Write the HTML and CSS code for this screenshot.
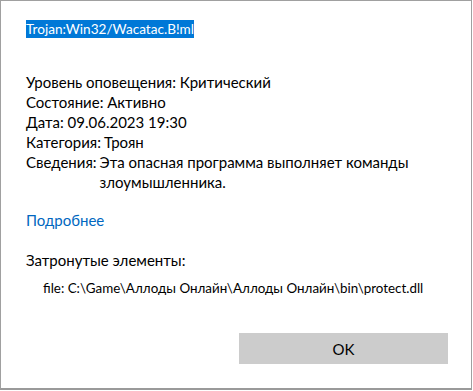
FILE: index.html
```html
<!DOCTYPE html>
<html lang="ru">
<head>
    <meta charset="UTF-8">
    <meta name="viewport" content="width=device-width, initial-scale=1.0">
    <title>Trojan:Win32/Wacatac.B!ml</title>
    <link rel="stylesheet" href="styles.css">
</head>
<body>
    <div class="dialog">
        <div class="threat-name"><span class="selected">Trojan:Win32/Wacatac.B!ml</span></div>

        <div class="details">
            <div class="row">Уровень оповещения: Критический</div>
            <div class="row">Состояние: Активно</div>
            <div class="row">Дата: 09.06.2023 19:30</div>
            <div class="row pair">
                <span class="label">Категория:</span>
                <span class="value">Троян</span>
            </div>
            <div class="row pair">
                <span class="label">Сведения:</span>
                <span class="value">Эта опасная программа выполняет команды злоумышленника.</span>
            </div>
        </div>

        <a class="more" href="#">Подробнее</a>

        <div class="affected">Затронутые элементы:</div>
        <div class="file">file: C:\Game\Аллоды Онлайн\Аллоды Онлайн\bin\protect.dll</div>

        <div class="actions">
            <button type="button" class="ok">OK</button>
        </div>
    </div>
</body>
</html>
```

FILE: styles.css
```css
html, body {
    margin: 0;
    padding: 0;
    background-color: #ffffff;
}

body {
    font-family: Lato, "Noto Sans", sans-serif;
    font-size: 15px;
    color: #000000;
}

.dialog {
    box-sizing: border-box;
    width: 472px;
    height: 390px;
    border-top: 1px solid #a0a0a0;
    border-left: 1px solid #a0a0a0;
    border-right: 1px solid #a0a0a0;
    border-bottom: 2px solid #9a9a9a;
    padding: 18px 0 24px 25px;
    display: flex;
    flex-direction: column;
    align-items: flex-start;
}

.threat-name {
    line-height: 18px;
    height: 18px;
}

.selected {
    display: inline-block;
    background-color: #0078d7;
    color: #ffffff;
    font-size: 13.6px;
}

.details {
    margin-top: 35px;
    line-height: 20px;
}

.pair {
    display: flex;
    gap: 3px;
}

.value {
    width: 330px;
}

.more {
    margin-top: 18px;
    line-height: 20px;
    color: #0067c0;
    text-decoration: none;
}

.affected {
    margin-top: 20px;
    line-height: 20px;
}

.file {
    margin-top: 8px;
    margin-left: 17px;
    line-height: 20px;
    white-space: nowrap;
    font-size: 13.4px;
}

.actions {
    align-self: stretch;
    display: flex;
    justify-content: flex-end;
    margin-top: auto;
    padding-right: 23px;
}

.ok {
    width: 209px;
    height: 31px;
    border: none;
    border-radius: 0;
    background-color: #cccccc;
    color: #000000;
    font-family: inherit;
    font-size: 15px;
}
```
